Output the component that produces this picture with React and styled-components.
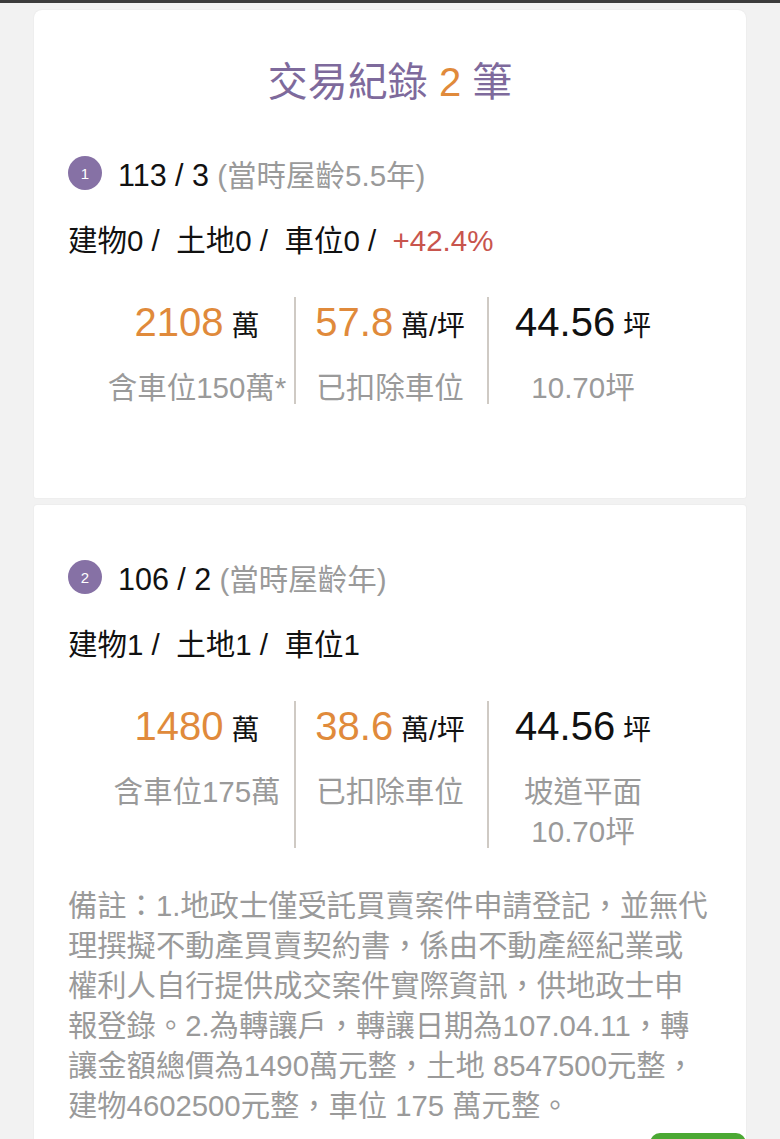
import React from "react";
import styled, { createGlobalStyle } from "styled-components";

const Global = createGlobalStyle`
  html, body { margin: 0; padding: 0; background: #f2f2f2; }
  body { font-family: "Liberation Sans", "Noto Sans CJK TC", sans-serif; color: #111; }
`;

const TopBar = styled.div`
  height: 3px;
  background: #3c3c3c;
`;

const Page = styled.div`
  padding: 7px 34px 0;
  display: flex;
  flex-direction: column;
  gap: 7px;
`;

const Card = styled.section`
  background: #fff;
  border-radius: ${(p) => (p.$first ? "8px 8px 2px 2px" : "3px")};
  box-shadow: 0 0 2px rgba(0, 0, 0, 0.07);
  padding: ${(p) => p.$pt}px 34px ${(p) => p.$pb}px;
`;

const Title = styled.h1`
  margin: 0 0 43px;
  font-weight: 400;
  font-size: 40px;
  line-height: 56px;
  text-align: center;
  color: #7e6a9c;
`;

const Accent = styled.span`
  color: #e08a3b;
`;

const Header = styled.div`
  display: flex;
  align-items: center;
  gap: 16px;
  height: 40px;
  font-size: 29.5px;
`;

const Badge = styled.span`
  width: 34px;
  height: 34px;
  border-radius: 50%;
  background: #8671a5;
  color: #fff;
  font-size: 15px;
  display: flex;
  align-items: center;
  justify-content: center;
  flex: none;
`;

const Date = styled.span`
  font-size: 30.5px;
`;

const Gray = styled.span`
  font-size: 29.5px;
  color: #9a9a9a;
`;

const Props = styled.div`
  margin-top: 28px;
  height: 40px;
  line-height: 40px;
  font-size: 29.5px;
  white-space: pre;
`;

const Red = styled.span`
  color: #c8554d;
`;

const Stats = styled.div`
  margin: 36px auto 0;
  width: 579px;
  display: grid;
  grid-template-columns: repeat(3, 1fr);
`;

const Col = styled.div`
  position: relative;
  text-align: center;
  &:not(:first-child)::before {
    content: "";
    position: absolute;
    left: 0;
    top: 0;
    bottom: 4px;
    width: 2px;
    background: #cfcac4;
  }
`;

const Big = styled.div`
  height: 50px;
  line-height: 50px;
  white-space: nowrap;
`;

const Num = styled.span`
  font-size: 40px;
  color: ${(p) => (p.$orange ? "#e08a3b" : "#111")};
`;

const Unit = styled.span`
  font-size: 28px;
  color: #111;
`;

const Sub = styled.div`
  margin-top: 21px;
  font-size: 29.5px;
  line-height: 40px;
  color: #9a9a9a;
  white-space: nowrap;
`;

const Remark = styled.p`
  margin: 34px 0 0;
  font-size: 29.3px;
  line-height: 40px;
  color: #9a9a9a;
`;

const ButtonRow = styled.div`
  display: flex;
  justify-content: flex-end;
  margin: 7px -34px 0 0;
`;

const GreenButton = styled.div`
  width: 96px;
  height: 48px;
  border-radius: 10px;
  background: #4ba833;
`;

const Stat = ({ num, unit, orange, subs }) => (
  <Col>
    <Big>
      <Num $orange={orange}>{num}</Num>
      <Unit> {unit}</Unit>
    </Big>
    <Sub>
      {subs.map((s, i) => (
        <div key={i}>{s}</div>
      ))}
    </Sub>
  </Col>
);

export default function App() {
  return (
    <>
      <Global />
      <TopBar />
      <Page>
        <Card $first $pt={44} $pb={90}>
          <Title>
            交易紀錄 <Accent>2</Accent> 筆
          </Title>
          <Header>
            <Badge>1</Badge>
            <span>
              <Date>113 / 3</Date> <Gray>(當時屋齡5.5年)</Gray>
            </span>
          </Header>
          <Props>
            {"建物0 /  土地0 /  車位0 /  "}
            <Red>+42.4%</Red>
          </Props>
          <Stats>
            <Stat num="2108" unit="萬" orange subs={["含車位150萬*"]} />
            <Stat num="57.8" unit="萬/坪" orange subs={["已扣除車位"]} />
            <Stat num="44.56" unit="坪" subs={["10.70坪"]} />
          </Stats>
        </Card>
        <Card $pt={52} $pb={0}>
          <Header>
            <Badge>2</Badge>
            <span>
              <Date>106 / 2</Date> <Gray>(當時屋齡年)</Gray>
            </span>
          </Header>
          <Props>{"建物1 /  土地1 /  車位1"}</Props>
          <Stats>
            <Stat num="1480" unit="萬" orange subs={["含車位175萬"]} />
            <Stat num="38.6" unit="萬/坪" orange subs={["已扣除車位"]} />
            <Stat num="44.56" unit="坪" subs={["坡道平面", "10.70坪"]} />
          </Stats>
          <Remark>
            備註：1.地政士僅受託買賣案件申請登記，並無代理撰擬不動產買賣契約書，係由不動產經紀業或權利人自行提供成交案件實際資訊，供地政士申報登錄。2.為轉讓戶，轉讓日期為107.04.11，轉讓金額總價為1490萬元整，土地 8547500元整，建物4602500元整，車位 175 萬元整。
          </Remark>
          <ButtonRow>
            <GreenButton />
          </ButtonRow>
        </Card>
      </Page>
    </>
  );
}
